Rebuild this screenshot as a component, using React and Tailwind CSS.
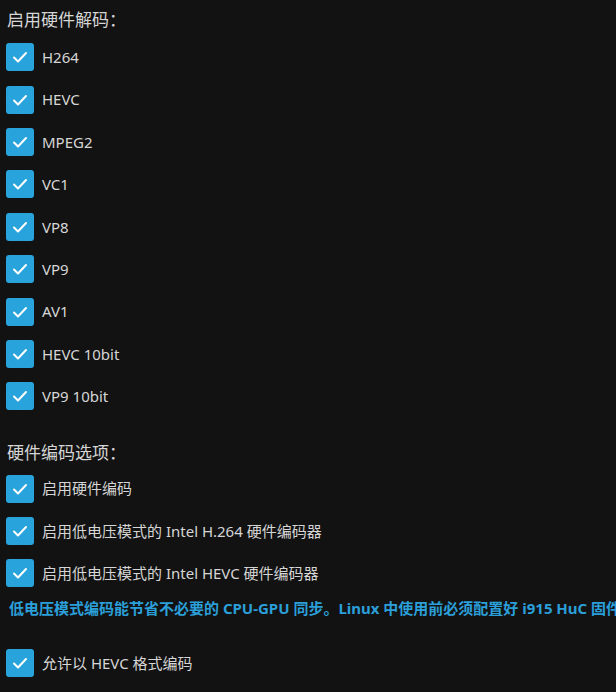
import React from "react";

const decoders = ["H264", "HEVC", "MPEG2", "VC1", "VP8", "VP9", "AV1", "HEVC 10bit", "VP9 10bit"];

function CheckRow({ label }) {
  return (
    <div className="flex items-center h-[42.4px]">
      <div className="w-7 h-7 ml-[6px] rounded-[3px] bg-[#29a3db] flex items-center justify-center shrink-0">
        <svg width="18" height="18" viewBox="0 0 18 18" fill="none">
          <path d="M3 9.5l4 4 8-8.5" stroke="#ffffff" strokeWidth="2" strokeLinecap="round" strokeLinejoin="round" />
        </svg>
      </div>
      <span className="ml-2 text-[15px] text-[#d6d6d6]">{label}</span>
    </div>
  );
}

export default function App() {
  return (
    <div
      className="w-[616px] h-[692px] overflow-hidden bg-[#121212] text-[#d6d6d6]"
      style={{ fontFamily: '"Noto Sans", "Noto Sans CJK SC", sans-serif' }}
    >
      <div className="pt-[7px] pl-[7px] text-[17px] leading-[26px]">启用硬件解码：</div>
      <div className="mt-[3px]">
        {decoders.map((d) => (
          <CheckRow key={d} label={d} />
        ))}
      </div>
      <div className="mt-[22px] pl-[7px] text-[17px] leading-[26px]">硬件编码选项：</div>
      <div className="mt-[2px]">
        <CheckRow label="启用硬件编码" />
        <CheckRow label="启用低电压模式的 Intel H.264 硬件编码器" />
        <CheckRow label="启用低电压模式的 Intel HEVC 硬件编码器" />
      </div>
      <div className="pl-[9px] mt-[2px] text-[15px] leading-[22px] font-bold text-[#2b9fd9] whitespace-nowrap">
        低电压模式编码能节省不必要的 CPU-GPU 同步。Linux 中使用前必须配置好 i915 HuC 固件
      </div>
      <div className="mt-[23px]">
        <CheckRow label="允许以 HEVC 格式编码" />
      </div>
    </div>
  );
}
